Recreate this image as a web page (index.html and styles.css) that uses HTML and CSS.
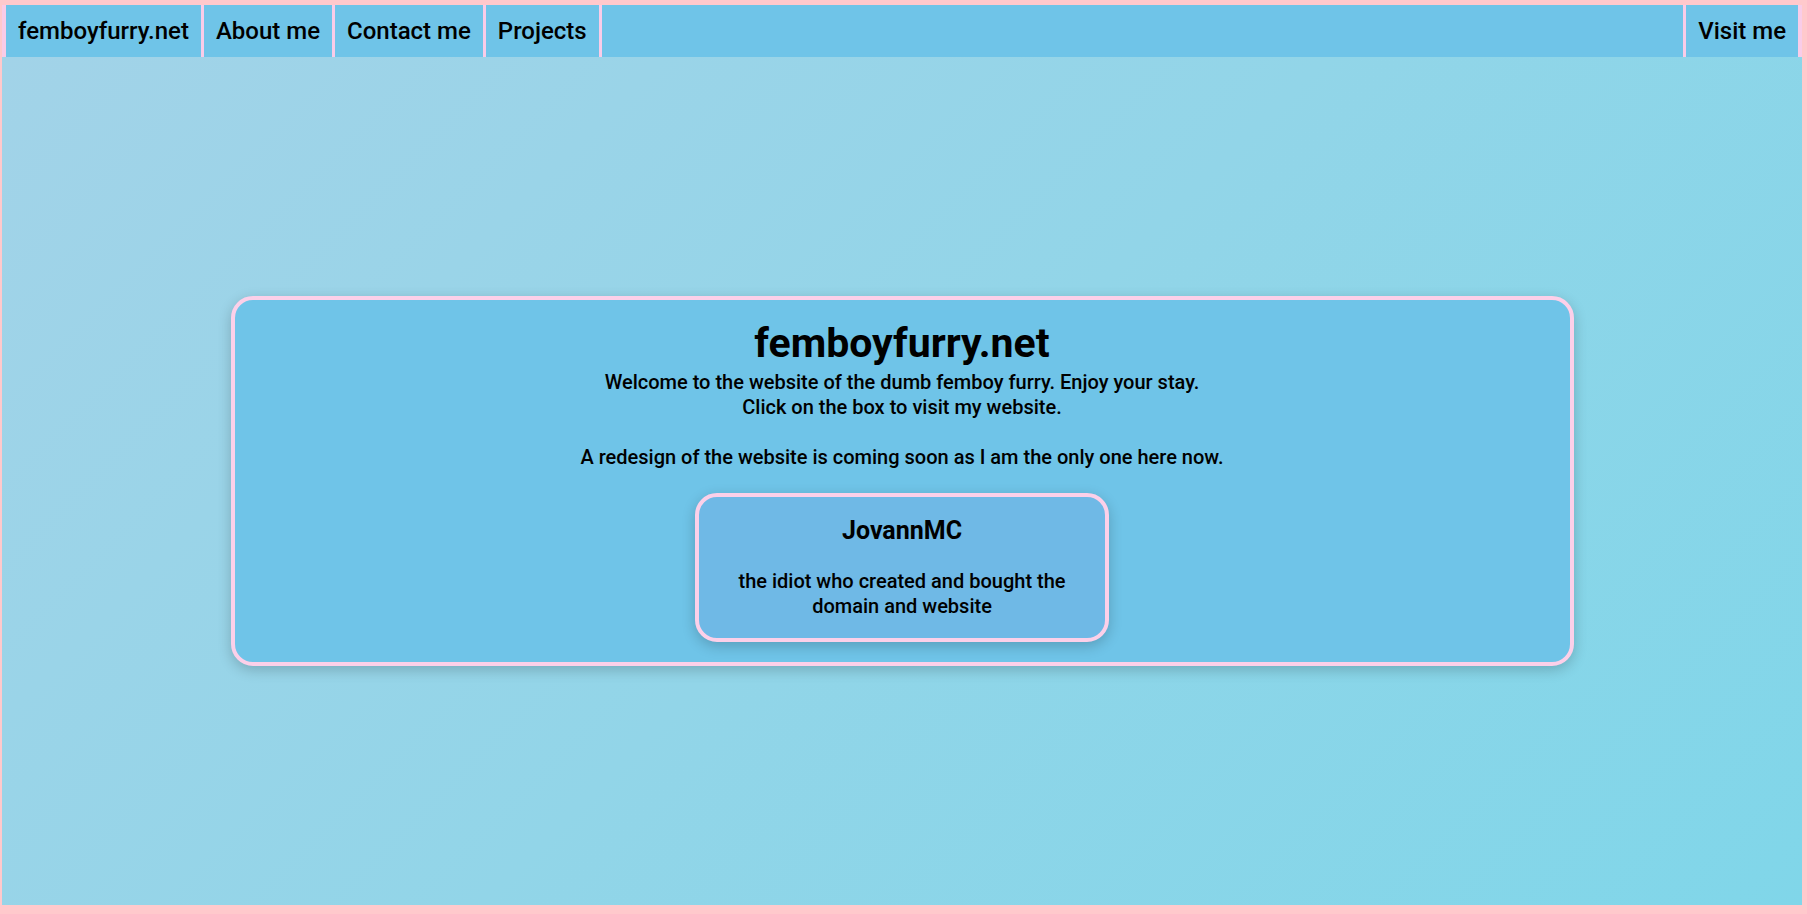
FILE: index.html
```html
<!DOCTYPE html>
<html lang="en">
<head>
<meta charset="utf-8">
<title>femboyfurry.net</title>
<link rel="stylesheet" href="styles.css">
</head>
<body>
<nav class="nav">
  <a class="nav-item" href="#">femboyfurry.net</a>
  <a class="nav-item" href="#">About me</a>
  <a class="nav-item" href="#">Contact me</a>
  <a class="nav-item" href="#">Projects</a>
  <span class="nav-fill"></span>
  <a class="nav-item" href="#">Visit me</a>
</nav>
<main class="main">
  <section class="card">
    <h1 class="card-title">femboyfurry.net</h1>
    <p class="card-text">Welcome to the website of the dumb femboy furry. Enjoy your stay.<br>Click on the box to visit my website.<br><br>A redesign of the website is coming soon as I am the only one here now.</p>
    <a class="person" href="#">
      <h2 class="person-name">JovannMC</h2>
      <p class="person-text">the idiot who created and bought the domain and website</p>
    </a>
  </section>
</main>
</body>
</html>
```
FILE: styles.css
```css
html, body {
  height: 100%;
}
body {
  margin: 0;
  box-sizing: border-box;
  padding: 5px 5px 9px 2px;
  background: #ffc9cc;
  font-family: Roboto, "Liberation Sans", sans-serif;
  color: #000;
  display: flex;
  flex-direction: column;
}
.nav {
  display: flex;
  gap: 3px;
  padding: 0 4px;
  background: #f9cce8;
  height: 52px;
  flex: none;
}
.nav-item {
  display: block;
  background: #6fc4e8;
  color: #000;
  text-decoration: none;
  font-size: 24px;
  font-weight: 500;
  line-height: 51px;
  padding: 1px 12px 0;
}
.nav-fill {
  flex: 1;
  background: #6fc4e8;
}
.main {
  flex: 1;
  display: flex;
  align-items: center;
  justify-content: center;
  background: linear-gradient(135deg, #a2d3e8 0%, #92d5e8 50%, #80d6e9 100%);
}
.card {
  box-sizing: border-box;
  width: 1343px;
  background: #6fc4e8;
  border: 4px solid #fcd0e9;
  border-radius: 22px;
  box-shadow: 0 4px 14px rgba(0, 0, 0, 0.2);
  text-align: center;
  padding: 19px 20px 20px;
  display: flex;
  flex-direction: column;
  align-items: center;
}
.card-title {
  margin: 0;
  font-size: 41px;
  font-weight: 700;
  line-height: normal;
}
.card-text {
  margin: 3px 0 0;
  font-size: 20px;
  font-weight: 500;
  line-height: 25px;
}
.person {
  display: block;
  box-sizing: border-box;
  width: 414px;
  margin-top: 23px;
  padding: 19px 28px 20px;
  background: #6fb9e6;
  border: 4px solid #fcd0e9;
  border-radius: 22px;
  box-shadow: 0 4px 14px rgba(0, 0, 0, 0.2);
  color: #000;
  text-decoration: none;
}
.person-name {
  margin: 0;
  font-size: 25px;
  font-weight: 700;
  line-height: normal;
}
.person-text {
  margin: 24px 0 0;
  font-size: 20px;
  font-weight: 500;
  line-height: 24.5px;
}
```
